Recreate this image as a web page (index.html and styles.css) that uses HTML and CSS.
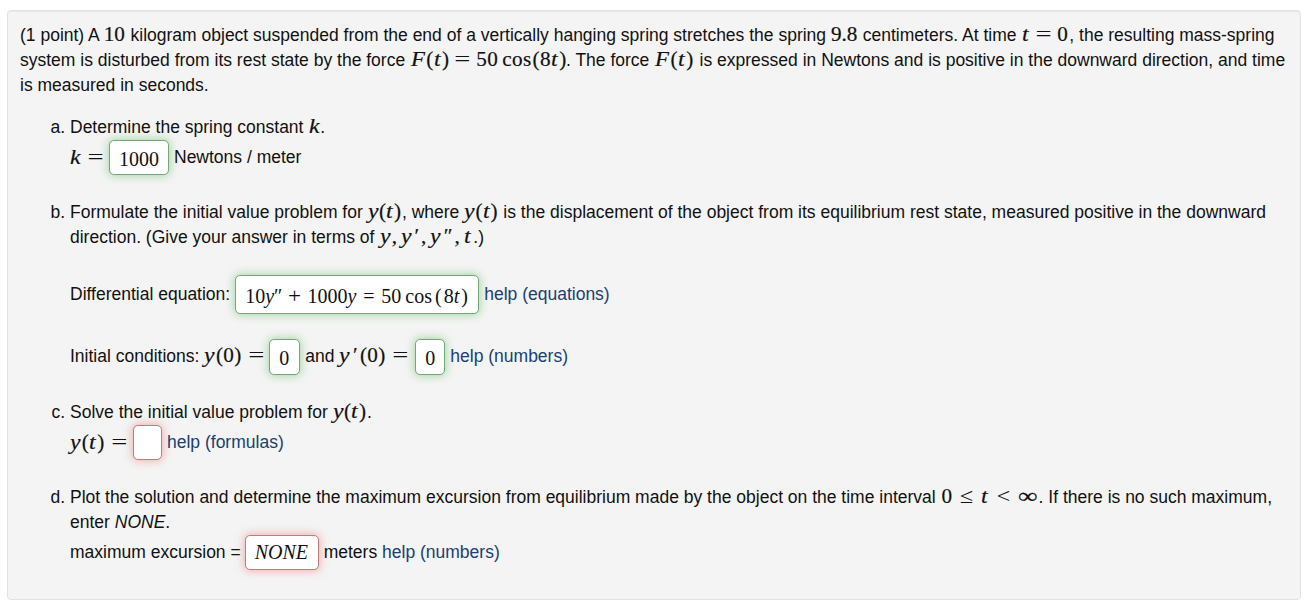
FILE: index.html
```html
<!DOCTYPE html>
<html lang="en">
<head>
	<meta charset="utf-8">
	<title>Spring problem</title>
	<link rel="stylesheet" href="styles.css">
</head>
<body>
<div class="problem">
	<p class="intro">
		(1 point) A <span class="math num">10</span> kilogram object suspended from the end of a vertically hanging spring stretches the spring <span class="math dec">9.8</span> centimeters. At time <span class="math tzero"><i>t</i><b>=</b>0</span>, the resulting mass-spring<br>
		system is disturbed from its rest state by the force <span class="math force"><i class="cap">F</i>(<i>t</i>)<b>=</b>50<span class="op">cos</span>(8<i>t</i>)</span>. The force <span class="math ft"><i class="cap">F</i>(<i>t</i>)</span> is expressed in Newtons and is positive in the downward direction, and time<br>
		is measured in seconds.
	</p>
	<ol class="parts">
		<li>
			Determine the spring constant <span class="math k"><i>k</i></span>.
			<div class="row">
				<span class="math keq"><i>k</i><b>=</b></span>
				<span class="answer correct a-k">1000</span>
				<span>Newtons / meter</span>
			</div>
		</li>
		<li>
			Formulate the initial value problem for <span class="math yt"><i>y</i>(<i>t</i>)</span>, where <span class="math yt"><i>y</i>(<i>t</i>)</span> is the displacement of the object from its equilibrium rest state, measured positive in the downward<br>
			direction. (Give your answer in terms of <span class="math terms"><i>y</i>,<i class="next">y</i><s>′</s>,<i class="next">y</i><s>″</s>,<i class="next">t</i></span>.)
			<div class="row equation">
				<span>Differential equation:</span>
				<span class="answer correct a-eq">10<i>y</i>″<b>+</b>1000<i>y</i><b>=</b>50<span class="op">cos</span><em>(</em>8<i>t</i><em>)</em></span>
				<a>help (equations)</a>
			</div>
			<div class="row conditions">
				<span>Initial conditions: <span class="math y0"><i>y</i>(0)<b>=</b></span></span>
				<span class="answer correct a-zero">0</span>
				<span>and <span class="math yp0"><i>y</i><s>′</s>(0)<b>=</b></span></span>
				<span class="answer correct a-zero a-last">0</span>
				<a>help (numbers)</a>
			</div>
		</li>
		<li>
			Solve the initial value problem for <span class="math yt"><i>y</i>(<i>t</i>)</span>.
			<div class="row">
				<span class="math yteq"><i>y</i>(<i>t</i>)<b>=</b></span>
				<span class="answer wrong a-empty"></span>
				<a>help (formulas)</a>
			</div>
		</li>
		<li>
			Plot the solution and determine the maximum excursion from equilibrium made by the object on the time interval <span class="math interval">0<b>≤</b><i>t</i><b>&lt;</b><u>∞</u></span>. If there is no such maximum,<br>
			enter <em>NONE</em>.
			<div class="row">
				<span>maximum excursion =</span>
				<span class="answer wrong a-none"><i>NONE</i></span>
				<span>meters <a>help (numbers)</a></span>
			</div>
		</li>
	</ol>
</div>
</body>
</html>
```
FILE: styles.css
```css
body {
  margin: 0;
  padding: 10px 14px 0 7px;
  background-color: #fff;
  color: #111;
  font-family: "Liberation Sans", Arial, sans-serif;
  font-size: 17.5px;
  line-height: 25px;
}

.problem {
  box-sizing: border-box;
  height: 590px;
  padding: 11.5px 0 0 12px;
  background-color: #f4f4f4;
  border: 1px solid #e2e2e2;
  border-radius: 4px;
  box-shadow: inset 0 1px 1px rgba(0, 0, 0, .05);
  white-space: nowrap;
}

.intro {
  margin: 0 0 17px;
}

.parts {
  margin: 0;
  padding-left: 50px;
  list-style: lower-alpha;
}

li {
  margin-bottom: 30px;
}

/* rows with an answer box */
.row {
  display: flex;
  align-items: center;
  height: 25px;
  margin-top: 5px;
}
.equation {
  margin-top: 32px;
}
.conditions {
  margin-top: 37px;
  margin-bottom: 31px;
}

a {
  color: #1a4074;
}

/* formulas */
.math {
  display: inline-block;
  font-family: "Liberation Serif", "Times New Roman", serif;
  font-size: 21.2px;
  line-height: 21px;
  -webkit-text-stroke: .2px #111;
}
.math i {
  display: inline-block;
  transform: scaleX(1.12);
  transform-origin: left;
  margin-right: 2px;
}
.math .cap {
  margin-right: 2px;
  transform: scaleX(1.08);
}
.math b, .answer b {
  display: inline-block;
  width: 15px;
  margin: 0 6px;
  font-weight: normal;
  text-align: center;
  -webkit-text-stroke: 0;
}
.math b {
  transform: scaleX(1.35);
}
.answer b {
  width: 13px;
}
.answer b:first-of-type {
  transform: scaleX(1.15);
}
.math s {
  text-decoration: none;
  margin: 0 2px;
}
.math u {
  display: inline-block;
  text-decoration: none;
  transform: scaleX(1.3);
  transform-origin: left;
}
.math .next {
  margin-left: 4px;
}
.op {
  margin: 0 1px 0 4px;
}
.num { width: 22px; }
.dec { width: 27px; }
.tzero {
  width: 47px;
  padding-left: 1px;
}
.force {
  width: 155px;
  padding-left: 1px;
  letter-spacing: .35px;
}
.ft {
  width: 39.5px;
  padding-left: 1px;
  letter-spacing: .4px;
}
.k {
  width: 11px;
  padding-left: 1px;
}
.keq { width: 34px; }
.keq b { margin-left: 7px; }
.yt { width: 34.3px; }
.terms {
  width: 93px;
  padding-left: 1px;
}
.y0 { width: 60px; }
.yp0 { width: 71px; }
.yteq { width: 58px; }
.y0, .yp0, .yteq {
  letter-spacing: .3px;
}
.y0 b, .yp0 b, .yteq b {
  margin: 0 0 0 7.5px;
}
.interval {
  width: 97px;
  padding-left: 1px;
}
.interval b {
  width: 13px;
  margin: 0 8px;
  transform: scaleX(1.15);
}

/* answer boxes */
.answer {
  box-sizing: border-box;
  flex: none;
  height: 35px;
  margin: 0 5px;
  padding: 4px 0 0 10px;
  background-color: #fff;
  border: 1px solid #74a878;
  border-radius: 5px;
  font-family: "Liberation Serif", "Times New Roman", serif;
  font-size: 20px;
  line-height: 29px;
}
.correct {
  box-shadow: 0 0 8px 1px rgba(90, 185, 90, .5);
}
.wrong {
  border-color: #c87878;
  box-shadow: 0 0 8px 1px rgba(235, 110, 110, .5);
}
.answer em {
  font-style: normal;
  margin: 0 2px;
}
.a-k {
  width: 60px;
  padding-left: 9px;
}
.a-eq {
  width: 244px;
  height: 39px;
  padding-left: 9px;
  line-height: 32px;
}
.a-zero {
  width: 31px;
  height: 36px;
  margin-top: 2px;
  padding-left: 9px;
}
.a-last {
  width: 30px;
}
.a-empty { width: 29px; }
.a-none {
  width: 74px;
  margin-left: 4px;
  padding: 2px 0 0 9px;
  font-size: 20px;
}
```
